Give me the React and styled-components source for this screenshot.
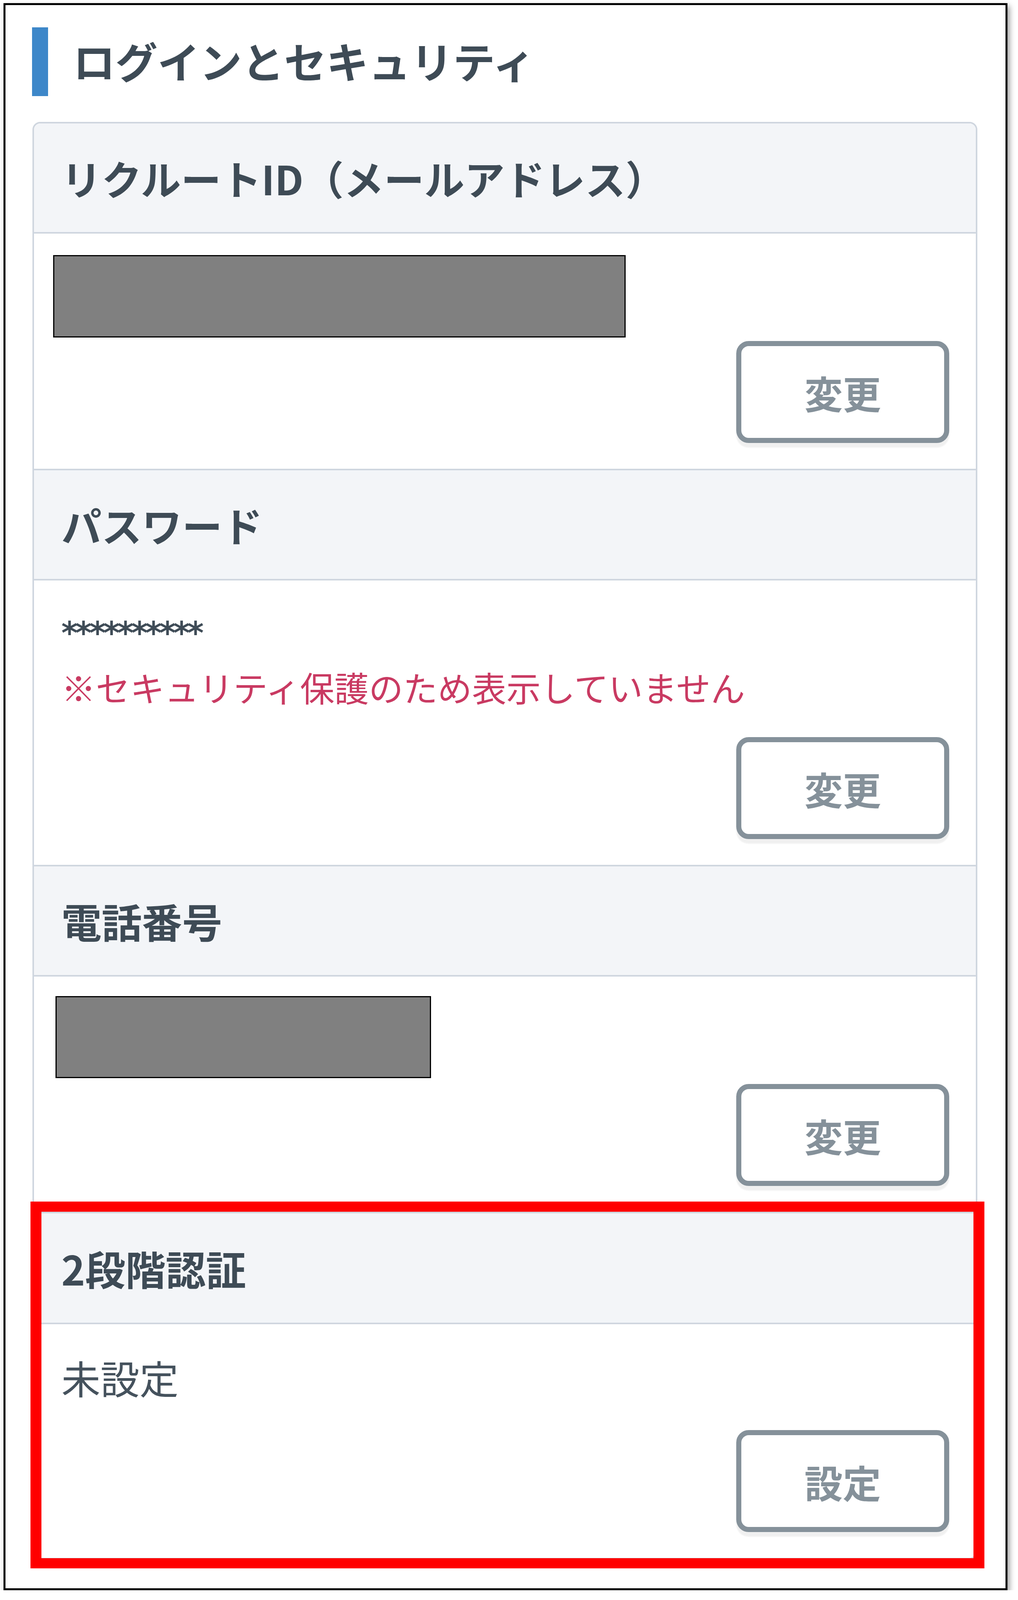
import React from "react";
import styled, { createGlobalStyle } from "styled-components";

// the browser shows only 4096px of the 4437px tall shot, so vertical sizes are squeezed to fit
const K = 4096 / 4437;
const v = (n) => Math.round(n * K);

const GlobalStyle = createGlobalStyle`
  html, body {
    margin: 0;
    padding: 0;
    background: #ffffff;
  }
  body {
    font-family: "Noto Sans CJK JP", "Noto Sans", sans-serif;
    color: #45525d;
  }
`;

const Frame = styled.div`
  box-sizing: border-box;
  margin: ${v(9)}px 0 0 9px;
  width: 2569px;
  height: ${v(4401)}px;
  border: 5px solid #000;
  background: #fff;
  box-shadow: 5px 7px 14px rgba(0, 0, 0, 0.4);
  padding: ${v(62)}px 72px 0 69px;
`;

const TitleRow = styled.div`
  display: flex;
  align-items: center;
  height: ${v(191)}px;
`;

const Bar = styled.span`
  display: block;
  width: 41px;
  height: ${v(191)}px;
  margin-left: -1px;
  background: #3d87c9;
`;

const Title = styled.h1`
  margin: -8px 0 0 64px;
  font-size: 108px;
  font-weight: 700;
  line-height: 1;
  color: #3e4b56;
`;

const Card = styled.div`
  margin-top: ${v(71)}px;
  border: 4px solid #cfd6df;
  border-radius: 20px;
  background: #fff;
`;

const Head = styled.div`
  display: flex;
  align-items: center;
  height: ${(p) => v(p.$h || 301)}px;
  padding-left: 70px;
  background: #f3f5f8;
  border-top: ${(p) => (p.$first ? "none" : "4px solid #cfd6df")};
  border-bottom: 4px solid #cfd6df;
  border-radius: ${(p) => (p.$first ? "16px 16px 0 0" : "0")};
  font-size: 103px;
  font-weight: 700;
  color: #3e4b56;
  line-height: 1;
`;

const Body = styled.div`
  display: flex;
  flex-direction: column;
  padding: ${v(58)}px 68px ${v(72)}px 70px;
`;

const Redacted = styled.div`
  box-sizing: border-box;
  width: ${(p) => p.$w}px;
  height: ${(p) => v(p.$h)}px;
  margin: ${(p) => v(p.$top || 0)}px 0 0 ${(p) => p.$left || 0}px;
  background: #808080;
  border: 3px solid #000;
`;

const Stars = styled.div`
  margin-top: ${(p) => v(p.$top || 0)}px;
  font-family: "DejaVu Sans", sans-serif;
  font-size: 80px;
  font-weight: 700;
  letter-spacing: -6px;
  line-height: ${v(109)}px;
  color: #3f4c57;
`;

const Note = styled.div`
  margin-top: ${(p) => v(p.$top || 0)}px;
  font-size: 88px;
  line-height: ${v(114)}px;
  color: #c93a62;
`;

const Value = styled.div`
  margin-top: ${(p) => v(p.$top || 0)}px;
  font-size: 100px;
  line-height: ${v(150)}px;
  color: #45525d;
`;

const ButtonRow = styled.div`
  display: flex;
  justify-content: flex-end;
  margin-top: ${(p) => v(p.$top || 0)}px;
`;

const Button = styled.button`
  box-sizing: border-box;
  width: 545px;
  height: ${v(283)}px;
  border: 13px solid #85919a;
  border-radius: 32px;
  background: #fff;
  box-shadow: 0 ${v(13)}px 3px rgba(0, 0, 0, 0.06);
  font-family: inherit;
  font-size: 98px;
  font-weight: 700;
  color: #85919a;
  padding: 0;
`;

const Highlight = styled.div`
  position: relative;
`;

const RedFrame = styled.div`
  position: absolute;
  top: -${v(28)}px;
  left: -9px;
  right: -22px;
  bottom: -${v(29)}px;
  border: 28px solid #ff0000;
  border-width: ${v(28)}px 28px;
  pointer-events: none;
`;

const Section = ({ title, first, children, h }) => (
  <>
    <Head $first={first} $h={h}>{title}</Head>
    <Body>{children}</Body>
  </>
);

export default function App() {
  return (
    <>
      <GlobalStyle />
      <Frame>
        <TitleRow>
          <Bar />
          <Title>ログインとセキュリティ</Title>
        </TitleRow>

        <Card>
          <Section title="リクルートID（メールアドレス）" first>
            <Redacted $w={1465} $h={229} $top={1} $left={-21} />
            <ButtonRow $top={10}>
              <Button>変更</Button>
            </ButtonRow>
          </Section>

          <Section title="パスワード">
            <Stars $top={32}>**********</Stars>
            <Note $top={37}>※セキュリティ保護のため表示していません</Note>
            <ButtonRow $top={83}>
              <Button>変更</Button>
            </ButtonRow>
          </Section>

          <Section title="電話番号">
            <Redacted $w={961} $h={227} $top={-4} $left={-15} />
            <ButtonRow $top={16}>
              <Button>変更</Button>
            </ButtonRow>
          </Section>

          <Highlight>
            <Head $h={303}>2段階認証</Head>
            <Body>
              <Value $top={14}>未設定</Value>
              <ButtonRow $top={72}>
                <Button>設定</Button>
              </ButtonRow>
            </Body>
            <RedFrame />
          </Highlight>
        </Card>
      </Frame>
    </>
  );
}
